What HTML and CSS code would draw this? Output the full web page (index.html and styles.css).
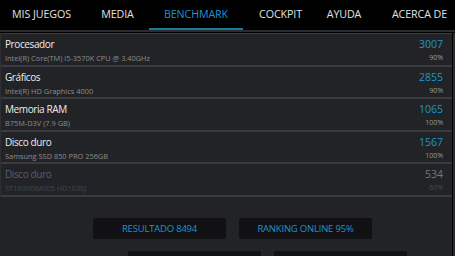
FILE: index.html
```html
<!DOCTYPE html>
<html lang="es">
<head>
    <meta charset="UTF-8">
    <link rel="stylesheet" href="styles.css">
</head>
<body>
    <nav class="tabs">
        <span class="tab">MIS JUEGOS</span>
        <span class="tab">MEDIA</span>
        <span class="tab active">BENCHMARK</span>
        <span class="tab">COCKPIT</span>
        <span class="tab">AYUDA</span>
        <span class="tab">ACERCA DE</span>
    </nav>
    <div class="rule"></div>
    <div class="main">
        <div class="content">
            <div class="list">
                <div class="row">
                    <div class="info">
                        <span class="name">Procesador</span>
                        <span class="sub">Intel(R) Core(TM) i5-3570K CPU @ 3.40GHz</span>
                    </div>
                    <div class="score">
                        <span class="num">3007</span>
                        <span class="pct">90%</span>
                    </div>
                </div>
                <div class="row">
                    <div class="info">
                        <span class="name">Gráficos</span>
                        <span class="sub">Intel(R) HD Graphics 4000</span>
                    </div>
                    <div class="score">
                        <span class="num">2855</span>
                        <span class="pct">90%</span>
                    </div>
                </div>
                <div class="row">
                    <div class="info">
                        <span class="name">Memoria RAM</span>
                        <span class="sub">B75M-D3V (7.9 GB)</span>
                    </div>
                    <div class="score">
                        <span class="num">1065</span>
                        <span class="pct">100%</span>
                    </div>
                </div>
                <div class="row">
                    <div class="info">
                        <span class="name">Disco duro</span>
                        <span class="sub">Samsung SSD 850 PRO 256GB</span>
                    </div>
                    <div class="score">
                        <span class="num">1567</span>
                        <span class="pct">100%</span>
                    </div>
                </div>
                <div class="row off">
                    <div class="info">
                        <span class="name">Disco duro</span>
                        <span class="sub">ST1000DM005 HD103SJ</span>
                    </div>
                    <div class="score">
                        <span class="num">534</span>
                        <span class="pct">60%</span>
                    </div>
                </div>
            </div>
            <div class="buttons">
                <button class="btn">RESULTADO 8494</button>
                <button class="btn">RANKING ONLINE 95%</button>
            </div>
            <div class="buttons second">
                <button class="btn"></button>
                <button class="btn"></button>
            </div>
        </div>
        <div class="scroll"></div>
    </div>
</body>
</html>
```

FILE: styles.css
```css
* {
    box-sizing: border-box;
}

body {
    margin: 0;
    width: 455px;
    height: 256px;
    overflow: hidden;
    background: #000;
    font-family: "Open Sans", "Noto Sans", sans-serif;
    color: #e6e6e6;
}

.tabs {
    display: grid;
    grid-template-columns: 89px 63px 94px 75px 52px 99px;
    height: 30px;
    margin-left: -3px;
    white-space: nowrap;
}

.tab {
    display: flex;
    align-items: center;
    justify-content: center;
    font-size: 10.7px;
    letter-spacing: -0.1px;
    color: #e2e2e2;
    border-bottom: 2px solid transparent;
}

.tab.active {
    color: #1d93cf;
    border-bottom-color: #1f7896;
}

.rule {
    height: 2px;
    background: #2a2b2f;
    margin-bottom: 1px;
}

.main {
    display: flex;
    height: 223px;
    overflow: hidden;
}

.content {
    width: 452px;
    background: #222327;
}

.scroll {
    width: 3px;
    border-left: 1px solid #000;
    background: #2b2c30;
}

.list {
    border-top: 1px solid #3a3b3f;
    border-left: 1px solid #2e2f33;
}

.row {
    display: flex;
    justify-content: space-between;
    height: 32.5px;
    padding: 3px 9px 0 4px;
    border-bottom: 2px solid #3a3b3f;
}

.info,
.score {
    display: flex;
    flex-direction: column;
}

.score {
    align-items: flex-end;
}

.name {
    font-size: 10px;
    line-height: 15px;
    letter-spacing: -0.4px;
    color: #ececec;
}

.sub {
    font-size: 7.4px;
    line-height: 12px;
    color: #8c8c8c;
}

.num {
    font-size: 10.5px;
    line-height: 15px;
    color: #1d93cf;
}

.pct {
    font-size: 7px;
    line-height: 12px;
    color: #9a9a9a;
}

.row.off .name {
    color: #5d5e62;
}

.row.off .sub {
    color: #46474b;
}

.row.off .num {
    color: #76777b;
}

.row.off .pct {
    color: #4a4b4f;
}

.buttons {
    display: flex;
    gap: 13px;
    padding-left: 93px;
    margin-top: 21px;
}

.buttons.second {
    padding-left: 128px;
    margin-top: 12px;
}

.btn {
    width: 133px;
    height: 21px;
    border: none;
    border-radius: 2px;
    background: #111113;
    color: #1d93cf;
    font-family: "Open Sans", "Noto Sans", sans-serif;
    font-size: 9.5px;
    letter-spacing: -0.2px;
    padding: 0;
}
```
